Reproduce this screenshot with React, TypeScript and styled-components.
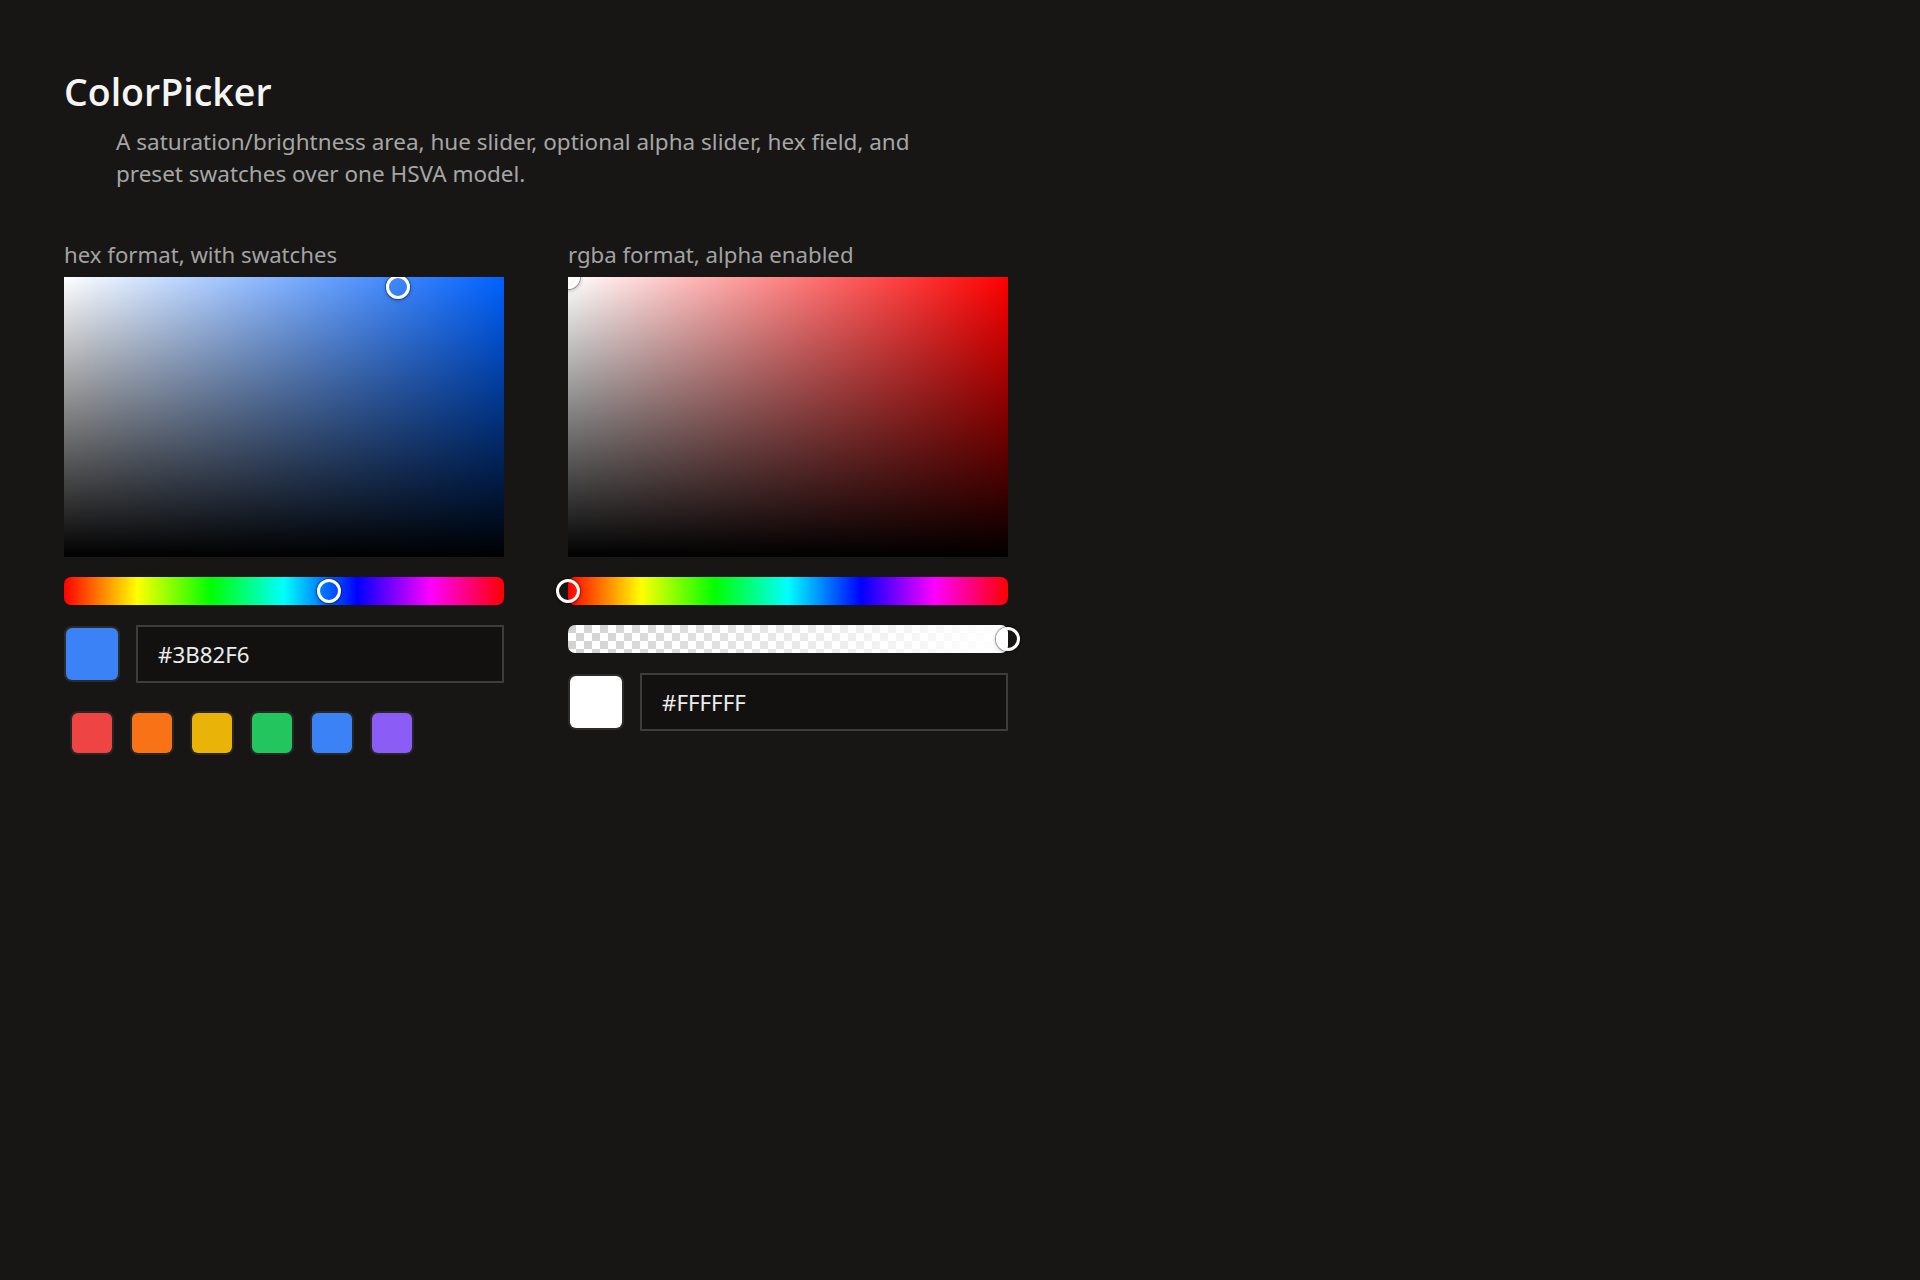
import React from "react";
import styled, { createGlobalStyle } from "styled-components";

const GlobalStyle = createGlobalStyle`
  html, body {
    margin: 0;
    padding: 0;
    background: #171615;
  }
  body {
    font-family: "Noto Sans", "Open Sans", sans-serif;
    color: #f5f5f5;
  }
`;

const Page = styled.main`
  box-sizing: border-box;
  min-height: 100vh;
  padding: 68px 64px;
`;

const Title = styled.h1`
  margin: 0;
  font-family: "Open Sans", "Noto Sans", sans-serif;
  font-size: 37.5px;
  line-height: 48px;
  font-weight: 600;
  color: #f4f4f4;
`;

const Description = styled.p`
  margin: 10px 0 0 52px;
  max-width: 830px;
  font-size: 22.5px;
  line-height: 32px;
  color: #a6a6a6;
`;

const Demos = styled.section`
  display: flex;
  align-items: flex-start;
  gap: 64px;
  margin-top: 51px;
`;

const Column = styled.div`
  width: 440px;
  display: flex;
  flex-direction: column;
`;

const Label = styled.div`
  font-size: 22.2px;
  line-height: 28px;
  color: #a3a3a3;
  margin-bottom: 8px;
`;

const Picker = styled.div`
  display: flex;
  flex-direction: column;
  gap: 20px;
`;

const SVArea = styled.div<{ $hue: number }>`
  position: relative;
  height: 280px;
  overflow: hidden;
  background: linear-gradient(to top, #000, rgba(0, 0, 0, 0)),
    linear-gradient(to right, #fff, hsl(${(p) => p.$hue}, 100%, 50%));
`;

const Track = styled.div<{ $kind: "hue" | "alpha"; $color?: string }>`
  position: relative;
  height: 28px;
  border-radius: 7px;
  ${(p) =>
    p.$kind === "hue"
      ? `background: linear-gradient(to right, #f00 0%, #ff0 16.67%, #0f0 33.33%, #0ff 50%, #00f 66.67%, #f0f 83.33%, #f00 100%);`
      : `background-color: #fff;
         background-image: linear-gradient(to right, rgba(255,255,255,0), ${p.$color}),
           conic-gradient(#fff 25%, #d2d2d2 0 50%, #fff 0 75%, #d2d2d2 0);
         background-size: 100% 100%, 16px 16px;`}
`;

const Thumb = styled.span`
  position: absolute;
  top: 50%;
  width: 24px;
  height: 24px;
  box-sizing: border-box;
  border: 3px solid #fff;
  border-radius: 50%;
  background: transparent;
  transform: translate(-50%, -50%);
  box-shadow: 0 0 0 1px rgba(0, 0, 0, 0.3), 0 1px 4px rgba(0, 0, 0, 0.35);
  pointer-events: none;
`;

const Row = styled.div`
  display: flex;
  align-items: center;
  gap: 16px;
`;

const Preview = styled.div<{ $color: string }>`
  flex: none;
  width: 56px;
  height: 56px;
  box-sizing: border-box;
  border: 2px solid rgba(255, 255, 255, 0.09);
  border-radius: 8px;
  background: ${(p) => p.$color};
  background-clip: padding-box;
`;

const HexInput = styled.input`
  flex: 1;
  min-width: 0;
  height: 58px;
  box-sizing: border-box;
  border: 2px solid #3d3c3b;
  border-radius: 0;
  background: #121110;
  color: #ececec;
  font-family: "Noto Sans", "Open Sans", sans-serif;
  font-size: 22.3px;
  padding: 0 20px;
  outline: none;
`;

const Swatches = styled.div`
  display: flex;
  gap: 16px;
  padding: 8px 6px 0;
`;

const Swatch = styled.button<{ $color: string }>`
  width: 44px;
  height: 44px;
  box-sizing: border-box;
  padding: 0;
  border: 2px solid rgba(255, 255, 255, 0.07);
  border-radius: 8px;
  background: ${(p) => p.$color};
  background-clip: padding-box;
  cursor: pointer;
`;

type HSVA = { h: number; s: number; v: number; a: number };

function hexToHsv(hex: string): HSVA {
  const n = hex.replace("#", "");
  const r = parseInt(n.slice(0, 2), 16) / 255;
  const g = parseInt(n.slice(2, 4), 16) / 255;
  const b = parseInt(n.slice(4, 6), 16) / 255;
  const max = Math.max(r, g, b);
  const min = Math.min(r, g, b);
  const d = max - min;
  let h = 0;
  if (d !== 0) {
    if (max === r) h = ((g - b) / d) % 6;
    else if (max === g) h = (b - r) / d + 2;
    else h = (r - g) / d + 4;
    h *= 60;
    if (h < 0) h += 360;
  }
  const s = max === 0 ? 0 : d / max;
  return { h, s, v: max, a: 1 };
}

const PRESETS = ["#ef4444", "#f97316", "#eab308", "#22c55e", "#3b82f6", "#8b5cf6"];

type PickerProps = {
  label: string;
  hex: string;
  alpha?: boolean;
  swatches?: string[];
};

function ColorPicker({ label, hex, alpha, swatches }: PickerProps) {
  const c = hexToHsv(hex);
  return (
    <Column>
      <Label>{label}</Label>
      <Picker>
        <SVArea $hue={c.h}>
          <Thumb style={{ left: `${c.s * 100}%`, top: `${(1 - c.v) * 100}%` }} />
        </SVArea>
        <Track $kind="hue">
          <Thumb style={{ left: `${(c.h / 360) * 100}%` }} />
        </Track>
        {alpha && (
          <Track $kind="alpha" $color={hex}>
            <Thumb style={{ left: `${c.a * 100}%` }} />
          </Track>
        )}
        <Row>
          <Preview $color={hex} />
          <HexInput readOnly value={hex.toUpperCase()} />
        </Row>
        {swatches && (
          <Swatches>
            {swatches.map((s) => (
              <Swatch key={s} $color={s} aria-label={s} />
            ))}
          </Swatches>
        )}
      </Picker>
    </Column>
  );
}

export default function App() {
  return (
    <>
      <GlobalStyle />
      <Page>
        <Title>ColorPicker</Title>
        <Description>
          A saturation/brightness area, hue slider, optional alpha slider, hex field, and preset swatches over one
          HSVA model.
        </Description>
        <Demos>
          <ColorPicker label="hex format, with swatches" hex="#3b82f6" swatches={PRESETS} />
          <ColorPicker label="rgba format, alpha enabled" hex="#ffffff" alpha />
        </Demos>
      </Page>
    </>
  );
}
